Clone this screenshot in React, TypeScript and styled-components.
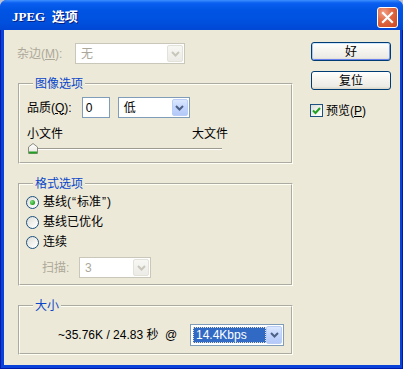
import React from "react";
import styled, { createGlobalStyle, css } from "styled-components";

const FONT = `"Liberation Sans", "Noto Sans CJK SC", sans-serif`;

const Global = createGlobalStyle`
  html, body { margin: 0; padding: 0; background: #b9c3d6; }
  body { width: 403px; height: 369px; overflow: hidden; }
`;

const Window = styled.div`
  width: 403px;
  height: 369px;
  display: flex;
  flex-direction: column;
  font-family: ${FONT};
  font-size: 12px;
  color: #000;
  border-radius: 7px 7px 0 0;
  overflow: hidden;
  background: #0842d8;
`;

const TitleBar = styled.div`
  height: 30px;
  flex: none;
  box-sizing: border-box;
  display: flex;
  align-items: center;
  padding: 4px 5px 0 12px;
  background: linear-gradient(180deg, #3d8fff 0px, #0a5ff0 3px, #0054e4 10px, #0050de 22px, #0047d4 30px);
`;

const Title = styled.span`
  flex: 1;
  color: #fff;
  font-family: "Liberation Serif", "Noto Sans CJK SC", serif;
  font-weight: bold;
  font-size: 13px;
  line-height: 16px;
  text-shadow: 1px 1px 0 #0a1e80;
  white-space: pre;
`;

const CloseBtn = styled.div`
  width: 21px;
  height: 21px;
  box-sizing: border-box;
  border: 1px solid #fff;
  border-radius: 3px;
  background: radial-gradient(circle at 30% 25%, #f2a288 0%, #e06a44 40%, #c9461f 100%);
  display: flex;
  align-items: center;
  justify-content: center;
`;

const Frame = styled.div`
  flex: 1;
  display: flex;
  padding: 0 3px 4px 4px;
  box-shadow: inset 1px 0 0 #0019a8, inset -1px 0 0 #0019a8, inset 0 -1px 0 #0019a8;
`;

const Client = styled.div`
  flex: 1;
  background: #ece9d8;
  display: flex;
  align-items: flex-start;
`;

const LeftCol = styled.div`
  width: 275px;
  margin-left: 14px;
  padding-top: 13px;
  display: flex;
  flex-direction: column;
`;

const RightCol = styled.div`
  width: 80px;
  margin-left: 18px;
  padding-top: 12px;
  display: flex;
  flex-direction: column;
`;

const Row = styled.div<{ $mt?: number; $ml?: number; $h?: number }>`
  display: flex;
  align-items: center;
  height: ${(p) => p.$h ?? 21}px;
  margin-top: ${(p) => p.$mt ?? 0}px;
  margin-left: ${(p) => p.$ml ?? 0}px;
`;

const Label = styled.span<{ $w?: number; $disabled?: boolean }>`
  display: inline-block;
  width: ${(p) => (p.$w ? `${p.$w}px` : "auto")};
  flex: none;
  line-height: 14px;
  white-space: pre;
  color: ${(p) => (p.$disabled ? "#aca899" : "#000")};
`;

const Quote = styled.span`
  padding: 0 1px;
`;

const Group = styled.fieldset<{ $mt: number; $pb: number }>`
  margin: ${(p) => p.$mt}px 0 0 0;
  padding: 0 0 ${(p) => p.$pb}px 7px;
  min-width: 0;
  width: 275px;
  box-sizing: border-box;
  border: 2px groove #fffff4;
`;

const Legend = styled.legend`
  height: 16px;
  line-height: 16px;
  padding: 0 2px;
  margin-left: 6px;
  color: #0a46c8;
`;

const Combo = styled.div<{ $w: number; $h?: number; $disabled?: boolean; $ml?: number }>`
  width: ${(p) => p.$w}px;
  height: ${(p) => p.$h ?? 21}px;
  margin-left: ${(p) => p.$ml ?? 0}px;
  flex: none;
  box-sizing: border-box;
  display: flex;
  align-items: stretch;
  padding: 1px;
  background: #fff;
  border: 1px solid ${(p) => (p.$disabled ? "#c9c7ba" : "#7f9db9")};
`;

const ComboText = styled.div<{ $disabled?: boolean; $selected?: boolean }>`
  flex: 1;
  display: flex;
  align-items: center;
  padding-left: 4px;
  line-height: 14px;
  color: ${(p) => (p.$disabled ? "#aca899" : "#000")};
  ${(p) =>
    p.$selected &&
    css`
      margin: 1px 0 1px 1px;
      padding-left: 3px;
      background: #316ac5;
      color: #fff;
      outline: 1px dotted #e8e0c0;
      outline-offset: -1px;
    `}
`;

const ComboArrow = styled.div<{ $disabled?: boolean }>`
  width: 16px;
  flex: none;
  box-sizing: border-box;
  display: flex;
  align-items: center;
  justify-content: center;
  border-radius: 2px;
  border: 1px solid ${(p) => (p.$disabled ? "#e3e1d8" : "#b9cdf7")};
  background: ${(p) =>
    p.$disabled
      ? "linear-gradient(180deg, #f7f7f4, #ecebe6)"
      : "linear-gradient(180deg, #dce8fe 0%, #c3d5fd 50%, #b4c9f8 100%)"};
`;

const TextInput = styled.div`
  width: 28px;
  height: 21px;
  flex: none;
  box-sizing: border-box;
  margin-left: 10px;
  border: 1px solid #7f9db9;
  background: #fff;
  padding-left: 3px;
  display: flex;
  align-items: center;
  line-height: 14px;
`;

const FileRow = styled.div`
  width: 201px;
  margin-top: 9px;
  display: flex;
  justify-content: space-between;
  line-height: 14px;
`;

const Slider = styled.div`
  position: relative;
  width: 194px;
  height: 11px;
  margin-top: 2px;
  margin-left: 1px;
`;

const Track = styled.div`
  position: absolute;
  left: 2px;
  right: 0;
  top: 5px;
  height: 1px;
  background: #9d9b8f;
  box-shadow: 0 1px 0 #fff;
`;

const Thumb = styled.svg`
  position: absolute;
  left: 0;
  top: 0;
`;

const Button = styled.div<{ $default?: boolean; $mt?: number }>`
  height: 19px;
  margin-top: ${(p) => p.$mt ?? 0}px;
  box-sizing: border-box;
  border: 1px solid #003c74;
  border-radius: 3px;
  background: linear-gradient(180deg, #ffffff 0%, #f6f5f0 40%, #ecebe5 85%, #d8d3c6 100%);
  display: flex;
  align-items: center;
  justify-content: center;
  line-height: 14px;
  ${(p) =>
    p.$default &&
    css`
      box-shadow: inset 0 1px 0 #cee7ff, inset 1px 0 0 #a9c6f5, inset -1px 0 0 #7a9cec, inset 0 -1px 0 #6982ee;
    `}
`;

const CheckRow = styled.div`
  display: flex;
  align-items: center;
  gap: 3px;
  margin-top: 14px;
  margin-left: -1px;
  height: 13px;
`;

const Box = styled.div`
  width: 13px;
  height: 13px;
  box-sizing: border-box;
  border: 1px solid #1c5180;
  background: linear-gradient(135deg, #dcdcd7 0%, #f4f4f1 60%, #ffffff 100%);
  display: flex;
  align-items: center;
  justify-content: center;
`;

const RadioRow = styled.div`
  display: flex;
  align-items: center;
  height: 20px;
  margin-left: -1px;
  gap: 4px;
`;

const RadioCircle = styled.div<{ $checked?: boolean }>`
  width: 13px;
  height: 13px;
  box-sizing: border-box;
  border-radius: 50%;
  border: 1px solid #1c5180;
  background: linear-gradient(135deg, #dcdcd7 0%, #f4f4f1 60%, #ffffff 100%);
  display: flex;
  align-items: center;
  justify-content: center;
  &::after {
    content: "";
    display: ${(p) => (p.$checked ? "block" : "none")};
    width: 5px;
    height: 5px;
    border-radius: 50%;
    background: radial-gradient(circle at 35% 35%, #7ee07e 0%, #21a121 70%);
  }
`;

const Chevron = ({ disabled }: { disabled?: boolean }) => (
  <svg width="9" height="6" viewBox="0 0 9 6">
    <path d="M1 1 L4.5 4.5 L8 1" fill="none" stroke={disabled ? "#c9c7ba" : "#4d6185"} strokeWidth="2" />
  </svg>
);

const Select = ({
  w,
  h,
  ml,
  text,
  disabled,
  selected,
}: {
  w: number;
  h?: number;
  ml?: number;
  text: string;
  disabled?: boolean;
  selected?: boolean;
}) => (
  <Combo $w={w} $h={h} $ml={ml} $disabled={disabled}>
    <ComboText $disabled={disabled} $selected={selected}>{text}</ComboText>
    <ComboArrow $disabled={disabled}>
      <Chevron disabled={disabled} />
    </ComboArrow>
  </Combo>
);

const Radio = ({ checked, children }: { checked?: boolean; children: React.ReactNode }) => (
  <RadioRow>
    <RadioCircle $checked={checked} />
    <Label>{children}</Label>
  </RadioRow>
);

export default function App() {
  return (
    <>
      <Global />
      <Window>
        <TitleBar>
          <Title>JPEG  选项</Title>
          <CloseBtn>
            <svg width="13" height="13" viewBox="0 0 13 13">
              <path d="M2 2 L11 11 M11 2 L2 11" stroke="#fff" strokeWidth="2.2" strokeLinecap="square" />
            </svg>
          </CloseBtn>
        </TitleBar>
        <Frame>
          <Client>
            <LeftCol>
              <Row $ml={-1}>
                <Label $w={58} $disabled>
                  杂边(<u>M</u>):
                </Label>
                <Select w={110} text="无" disabled />
              </Row>

              <Group $mt={12} $pb={8}>
                <Legend>图像选项</Legend>
                <Row $mt={5}>
                  <Label>
                    品质(<u>Q</u>):
                  </Label>
                  <TextInput>0</TextInput>
                  <Select w={72} ml={8} text="低" />
                </Row>
                <FileRow>
                  <span>小文件</span>
                  <span>大文件</span>
                </FileRow>
                <Slider>
                  <Track />
                  <Thumb width="10" height="11" viewBox="0 0 10 11">
                    <defs>
                      <linearGradient id="tg" x1="0" y1="0" x2="0" y2="1">
                        <stop offset="0" stopColor="#ffffff" />
                        <stop offset="1" stopColor="#e6e5dd" />
                      </linearGradient>
                    </defs>
                    <path d="M0.5 10.5 V4 L5 0.5 L9.5 4 V10.5 Z" fill="url(#tg)" stroke="#8a8a80" />
                    <path d="M1 9.5 H9" stroke="#21a121" strokeWidth="2" />
                  </Thumb>
                </Slider>
              </Group>

              <Group $mt={12} $pb={6}>
                <Legend>格式选项</Legend>
                <Radio checked>
                  基线(<Quote>“</Quote>标准<Quote>”</Quote>)
                </Radio>
                <Radio>基线已优化</Radio>
                <Radio>连续</Radio>
                <Row $mt={5} $ml={15}>
                  <Label $w={37} $disabled>
                    扫描:
                  </Label>
                  <Select w={72} text="3" disabled />
                </Row>
              </Group>

              <Group $mt={12} $pb={7}>
                <Legend>大小</Legend>
                <Row $mt={10} $h={22} $ml={31}>
                  <Label $w={132}>~35.76K / 24.83 秒  @</Label>
                  <Select w={94} h={22} text="14.4Kbps" selected />
                </Row>
              </Group>
            </LeftCol>

            <RightCol>
              <Button $default>好</Button>
              <Button $mt={10}>复位</Button>
              <CheckRow>
                <Box>
                  <svg width="9" height="8" viewBox="0 0 9 8">
                    <path d="M1 3.5 L3.5 6 L8 1" fill="none" stroke="#21a121" strokeWidth="2" />
                  </svg>
                </Box>
                <Label>
                  预览(<u>P</u>)
                </Label>
              </CheckRow>
            </RightCol>
          </Client>
        </Frame>
      </Window>
    </>
  );
}
